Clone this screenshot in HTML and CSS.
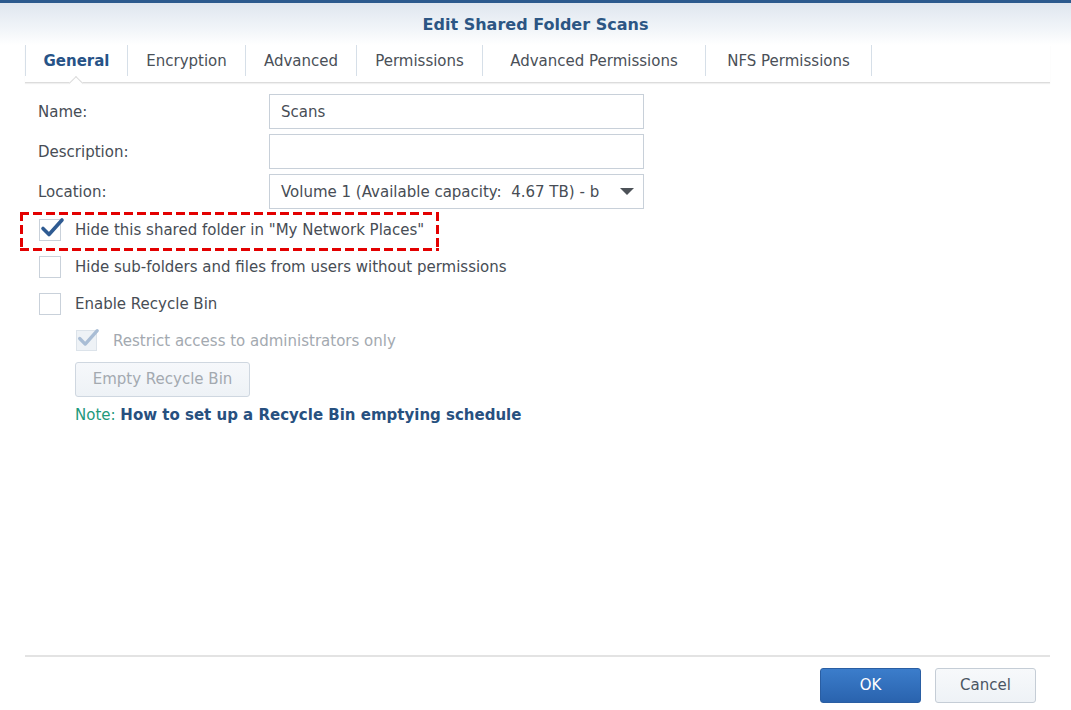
FILE: index.html
```html
<!DOCTYPE html>
<html>
<head>
<meta charset="utf-8">
<link rel="stylesheet" href="styles.css">
</head>
<body>
<div class="window">
  <div class="topbar"></div>
  <div class="header">
    <div class="title">Edit Shared Folder Scans</div>
  </div>
  <div class="tabs">
    <div class="tab active t-general">General</div>
    <div class="tab t-encryption">Encryption</div>
    <div class="tab t-advanced">Advanced</div>
    <div class="tab t-permissions">Permissions</div>
    <div class="tab t-advperm">Advanced Permissions</div>
    <div class="tab t-nfs">NFS Permissions</div>
  </div>
  <div class="content">
    <div class="field">
      <div class="label">Name:</div>
      <div class="input"><span>Scans</span></div>
    </div>
    <div class="field">
      <div class="label">Description:</div>
      <div class="input"></div>
    </div>
    <div class="field">
      <div class="label">Location:</div>
      <div class="input select">
        <span>Volume 1 (Available capacity:&nbsp; 4.67 TB) - b</span>
        <span class="arrow"></span>
      </div>
    </div>
    <div class="check-row highlight">
      <span class="box checked">
        <svg viewBox="0 0 26 26" width="26" height="26"><path d="M4 12.5 L10 18.5 L23 4" fill="none" stroke="#2f5b92" stroke-width="3.6" stroke-linecap="round" stroke-linejoin="round"/></svg>
      </span>
      <span class="text">Hide this shared folder in "My Network Places"</span>
    </div>
    <div class="check-row">
      <span class="box"></span>
      <span class="text">Hide sub-folders and files from users without permissions</span>
    </div>
    <div class="check-row">
      <span class="box"></span>
      <span class="text">Enable Recycle Bin</span>
    </div>
    <div class="sub">
      <div class="check-row disabled">
        <span class="box checked dis">
          <svg viewBox="0 0 26 26" width="24" height="24"><path d="M4 12.5 L10 18.5 L23 4" fill="none" stroke="#a9bdd5" stroke-width="3.6" stroke-linecap="round" stroke-linejoin="round"/></svg>
        </span>
        <span class="text">Restrict access to administrators only</span>
      </div>
      <div class="btn-disabled">Empty Recycle Bin</div>
      <div class="note"><span class="note-label">Note:</span> <span class="note-link">How to set up a Recycle Bin emptying schedule</span></div>
    </div>
  </div>
  <div class="footer">
    <div class="btn ok">OK</div>
    <div class="btn cancel">Cancel</div>
  </div>
</div>
</body>
</html>
```

FILE: styles.css
```css
html, body {
  margin: 0;
  padding: 0;
  background: #ffffff;
}
body {
  font-family: "DejaVu Sans", Verdana, sans-serif;
  font-size: 15px;
  color: #474d55;
}
.window {
  height: 710px;
  display: flex;
  flex-direction: column;
  background: #fff;
}
.topbar {
  height: 3px;
  background: #2c5a8e;
}
.header {
  height: 42px;
  background: linear-gradient(to bottom, #dfe6ef 0%, #f4f7fa 70%, #ffffff 100%);
  padding-top: 11px;
  box-sizing: border-box;
}
.title {
  text-align: center;
  font-weight: bold;
  font-size: 16px;
  line-height: 22px;
  color: #2c5684;
}
.tabs {
  display: flex;
  margin: 0 21px 0 25px;
  padding-bottom: 6px;
  border-bottom: 1px solid #dcdcdc;
  box-shadow: 0 1px 1px rgba(0,0,0,0.06);
  position: relative;
}
.tab {
  height: 31px;
  line-height: 31px;
  padding-top: 1px;
  box-sizing: border-box;
  text-align: center;
  flex: none;
  border-right: 1px solid #d6dfe8;
  color: #4a5058;
  white-space: nowrap;
}
.tab:first-child {
  border-left: 1px solid #d6dfe8;
}
.t-general { width: 103px; }
.t-encryption { width: 118px; }
.t-advanced { width: 111px; }
.t-permissions { width: 126px; }
.t-advperm { width: 223px; }
.t-nfs { width: 166px; }
.tab.active {
  font-weight: bold;
  color: #275387;
  position: relative;
}
.tab.active::after {
  content: "";
  position: absolute;
  left: 45px;
  bottom: -12px;
  width: 9px;
  height: 9px;
  background: #fff;
  border-left: 1px solid #dcdcdc;
  border-top: 1px solid #dcdcdc;
  transform: rotate(45deg);
}
.content {
  flex: 1;
  padding: 11px 0 0 38px;
}
.field {
  display: flex;
  align-items: center;
  height: 34px;
  margin-bottom: 6px;
}
.label {
  width: 231px;
  padding-top: 2px;
  color: #474d55;
}
.input {
  width: 375px;
  height: 35px;
  box-sizing: border-box;
  border: 1px solid #c8d0d9;
  padding: 2px 11px 0 11px;
  color: #474d55;
  background: #fff;
  display: flex;
  align-items: center;
}
.input.select {
  justify-content: space-between;
  padding-right: 9px;
}
.arrow {
  width: 0;
  height: 0;
  border-left: 7px solid transparent;
  border-right: 7px solid transparent;
  border-top: 7px solid #4d5258;
  margin-top: -1px;
}
.check-row {
  display: flex;
  align-items: center;
  height: 37px;
  margin-left: 1px;
  position: relative;
}
.highlight {
  margin-top: -3px;
}
.highlight::after {
  content: "";
  position: absolute;
  left: -19px;
  top: 1px;
  width: 419px;
  height: 39px;
  background:
    repeating-linear-gradient(to right, #e30000 0 9px, transparent 9px 13px) left top / 100% 3px no-repeat,
    repeating-linear-gradient(to right, #e30000 0 9px, transparent 9px 13px) left bottom / 100% 3px no-repeat,
    repeating-linear-gradient(to bottom, #e30000 0 9px, transparent 9px 13px) left top / 3px 100% no-repeat,
    repeating-linear-gradient(to bottom, #e30000 0 9px, transparent 9px 13px) right top / 3px 100% no-repeat;
}
.box {
  width: 22px;
  height: 22px;
  box-sizing: border-box;
  border: 1px solid #c9d1da;
  background: #fff;
  margin-right: 14px;
  position: relative;
  flex: none;
}
.box svg {
  position: absolute;
  left: -1px;
  top: -4px;
}
.box.dis {
  background: #eef2f6;
  border-color: #dce3ea;
  width: 21px;
  height: 21px;
  margin-right: 16px;
}
.box.dis svg {
  left: -1px;
  top: -4px;
}
.disabled .text {
  color: #a3a9b0;
}
.sub {
  padding-left: 37px;
}
.sub .check-row {
  margin-left: 1px;
}
.btn-disabled {
  margin-top: 3px;
  width: 175px;
  height: 35px;
  box-sizing: border-box;
  border: 1px solid #cfd7e0;
  border-radius: 3px;
  background: linear-gradient(to bottom, #f6f8fb, #eef2f6);
  color: #a3a9b0;
  text-align: center;
  line-height: 33px;
}
.note {
  margin-top: 8px;
  line-height: 20px;
}
.note-label {
  color: #1e9a7b;
}
.note-link {
  color: #27507f;
  font-weight: bold;
}
.footer {
  margin: 0 21px 7px 25px;
  border-top: 2px solid #e3e3e3;
  padding: 11px 14px 0 0;
  display: flex;
  justify-content: flex-end;
  gap: 14px;
}
.btn {
  width: 101px;
  height: 35px;
  box-sizing: border-box;
  border-radius: 3px;
  text-align: center;
  line-height: 33px;
}
.ok {
  background: linear-gradient(to bottom, #3b7dcb, #2a63ae);
  border: 1px solid #2a5ea3;
  color: #ffffff;
}
.cancel {
  background: linear-gradient(to bottom, #f7f9fb, #eef2f6);
  border: 1px solid #c5cdd6;
  color: #4a5563;
}
```
